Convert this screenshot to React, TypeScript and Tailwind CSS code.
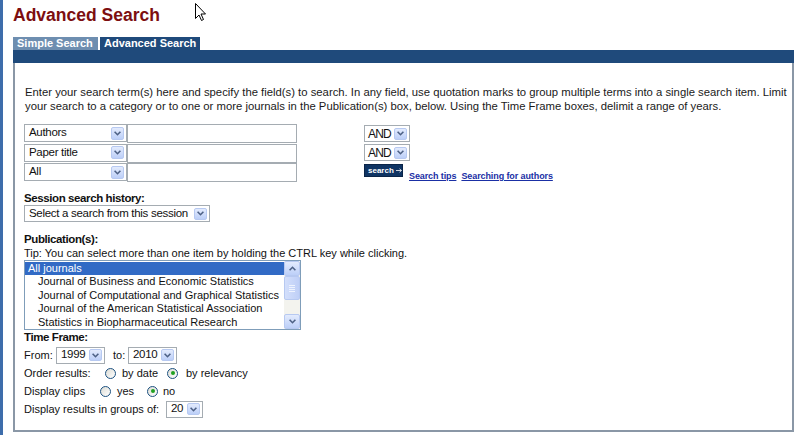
import React from "react";

const F = { fontFamily: '"Liberation Sans", Arial, sans-serif' };

function Chevron() {
  return (
    <svg width="7" height="5" viewBox="0 0 7 5">
      <path d="M0.6 0.8 L3.5 3.7 L6.4 0.8" fill="none" stroke="#4d6185" strokeWidth="1.6" />
    </svg>
  );
}

function DropBtn({ h = 13 }: { h?: number }) {
  return (
    <div
      className="w-[13px] shrink-0 flex items-center justify-center rounded-[2px] border border-[#b7c9f1] bg-gradient-to-b from-[#e3ebfd] to-[#bccff8]"
      style={{ height: h }}
    >
      <Chevron />
    </div>
  );
}

function Select({
  label,
  w,
  h = 17,
  text = "text-[11.5px] tracking-[-0.3px]",
  pl = "pl-[4px]",
}: {
  label: string;
  w: string;
  h?: number;
  text?: string;
  pl?: string;
}) {
  return (
    <div
      className={`${w} flex items-center justify-between border border-[#a5acb2] bg-white pr-[2px] ${pl} ${text} text-[#111]`}
      style={{ height: h }}
    >
      <span className="leading-none whitespace-nowrap">{label}</span>
      <DropBtn h={h - 5} />
    </div>
  );
}

function Radio({ checked }: { checked?: boolean }) {
  return (
    <span className="inline-flex w-[11px] h-[11px] rounded-full border border-[#1c5180] bg-gradient-to-br from-[#dcdcd5] to-white items-center justify-center shrink-0">
      {checked && <span className="w-[4px] h-[4px] rounded-full bg-[#21a121]" />}
    </span>
  );
}

export default function App() {
  const journals = [
    "Journal of Business and Economic Statistics",
    "Journal of Computational and Graphical Statistics",
    "Journal of the American Statistical Association",
    "Statistics in Biopharmaceutical Research",
  ];
  const heading = "text-[11.5px] tracking-[-0.4px] font-bold leading-[14px]";
  return (
    <div className="relative w-[800px] h-[435px] bg-white flex overflow-hidden text-[#111]" style={F}>
      <div className="w-[3px] shrink-0 bg-[#3e6dab]" />
      <div className="flex-1 pl-[10px] pr-[6px] flex flex-col">
        <h1 className="h-[37px] pt-[5px] text-[17.5px] leading-[20px] font-bold text-[#7d0e10]">Advanced Search</h1>
        <div className="flex h-[13px] text-[11px] font-bold text-white leading-[13px]">
          <div className="w-[85px] bg-[#6e8eb0] pl-[4px]">Simple Search</div>
          <div className="w-[2px]" />
          <div className="w-[100px] bg-[#1f4a7b] pl-[4px]">Advanced Search</div>
        </div>
        <div className="h-[13px] bg-[#1f4a7b]" />
        <div className="h-[369px] border-l-2 border-r-2 border-b-2 border-[#8a97a6] pl-[9px] pt-[22px]">
          <p className="text-[11.3px] leading-[14px] text-[#1a1a1a] pr-[2px] pl-[1px]">
            Enter your search term(s) here and specify the field(s) to search. In any field, use quotation marks to group multiple terms into a single search item. Limit your search to a category or to one or more journals in the Publication(s) box, below. Using the Time Frame boxes, delimit a range of years.
          </p>
          <div className="flex mt-[11px]">
            <div className="flex flex-col gap-[1.5px]">
              {["Authors", "Paper title", "All"].map((l) => (
                <div key={l} className="flex h-[18px]">
                  <Select label={l} w="w-[103px]" h={18} />
                  <div className="w-[170px] h-[19px] border border-[#a5acb2] bg-white" />
                </div>
              ))}
            </div>
            <div className="ml-[67px] pt-[1px] flex flex-col gap-[2px]">
              <Select label="AND" w="w-[46px]" h={17} text="text-[12px] tracking-[-0.8px]" pl="pl-[3px]" />
              <Select label="AND" w="w-[46px]" h={17} text="text-[12px] tracking-[-0.8px]" pl="pl-[3px]" />
              <div className="flex items-end gap-[6px] mt-[1px]">
                <div className="w-[39px] h-[13px] bg-[#0f3463] border border-[#0a2447] text-white text-[8px] font-bold leading-[11px] pl-[3px] whitespace-nowrap flex items-center gap-[2px]">
                  <span>search</span>
                  <svg width="7" height="5" viewBox="0 0 7 5">
                    <path d="M0 2.5 H6 M4 0.6 L6.2 2.5 L4 4.4" fill="none" stroke="white" strokeWidth="0.9" />
                  </svg>
                </div>
                <a className="text-[9px] tracking-[-0.1px] font-bold text-[#1a2fa5] underline leading-[10px] translate-y-[4px]">Search tips</a>
                <a className="text-[9px] tracking-[-0.1px] font-bold text-[#1a2fa5] underline leading-[10px] translate-y-[4px] -ml-[1px]">Searching for authors</a>
              </div>
            </div>
          </div>
          <div className={`mt-[10px] ${heading}`}>Session search history:</div>
          <div>
            <Select label="Select a search from this session" w="w-[186px]" h={17} />
          </div>
          <div className={`mt-[10px] ${heading}`}>Publication(s):</div>
          <div className="text-[11px] leading-[14px]">Tip: You can select more than one item by holding the CTRL key while clicking.</div>
          <div className="w-[277px] h-[70px] border border-[#7f9db9] bg-white flex">
            <div className="flex-1 flex flex-col text-[11px] pt-[1px]">
              <div className="h-[13px] leading-[13px] bg-[#316ac5] text-white pl-[3px]">All journals</div>
              {journals.map((j) => (
                <div key={j} className="h-[13.7px] leading-[13.7px] pl-[13px] whitespace-nowrap">{j}</div>
              ))}
            </div>
            <div className="w-[16px] bg-[#f3f3ee] flex flex-col justify-between">
              <div className="flex flex-col">
                <div className="h-[15px] flex items-center justify-center rounded-[2px] border border-[#b7c9f1] bg-gradient-to-b from-[#e3ebfd] to-[#bccff8]">
                  <svg width="7" height="5" viewBox="0 0 7 5"><path d="M0.6 4.2 L3.5 1.3 L6.4 4.2" fill="none" stroke="#4d6185" strokeWidth="1.6" /></svg>
                </div>
                <div className="h-[24px] rounded-[2px] border border-[#b7c9f1] bg-gradient-to-r from-[#d3dffb] to-[#bfcff7] flex items-center justify-center">
                  <div className="flex flex-col gap-[1px]">
                    <div className="w-[6px] h-px bg-[#eef3fe]" />
                    <div className="w-[6px] h-px bg-[#eef3fe]" />
                    <div className="w-[6px] h-px bg-[#eef3fe]" />
                    <div className="w-[6px] h-px bg-[#eef3fe]" />
                  </div>
                </div>
              </div>
              <div className="h-[15px] flex items-center justify-center rounded-[2px] border border-[#b7c9f1] bg-gradient-to-b from-[#e3ebfd] to-[#bccff8]">
                <Chevron />
              </div>
            </div>
          </div>
          <div className={heading}>Time Frame:</div>
          <div className="mt-[2px] flex flex-col text-[11px]">
            <div className="h-[18px] flex items-center">
              <span className="w-[32px]">From:</span>
              <Select label="1999" w="w-[49px]" h={17} pl="pl-[4px]" />
              <span className="ml-[8px] w-[15px]">to:</span>
              <Select label="2010" w="w-[49px]" h={17} pl="pl-[4px]" />
            </div>
            <div className="h-[18px] flex items-center">
              <span className="w-[81px]">Order results:</span>
              <Radio />
              <span className="ml-[6px] w-[45px]">by date</span>
              <Radio checked />
              <span className="ml-[8px]">by relevancy</span>
            </div>
            <div className="h-[18px] flex items-center">
              <span className="w-[76px]">Display clips</span>
              <Radio />
              <span className="ml-[6px] w-[30px]">yes</span>
              <Radio checked />
              <span className="ml-[5px]">no</span>
            </div>
            <div className="h-[18px] flex items-center">
              <span className="w-[142px]">Display results in groups of:</span>
              <Select label="20" w="w-[37px]" h={17} pl="pl-[4px]" />
            </div>
          </div>
        </div>
      </div>
      <svg className="absolute left-[195px] top-[3px]" width="12" height="19" viewBox="0 0 12 19">
        <path d="M0.5 0.5 L0.5 15.5 L4 12 L6.5 17.5 L8.5 16.5 L6 11 L10.5 11 Z" fill="white" stroke="black" strokeWidth="1" strokeLinejoin="miter" />
      </svg>
    </div>
  );
}
